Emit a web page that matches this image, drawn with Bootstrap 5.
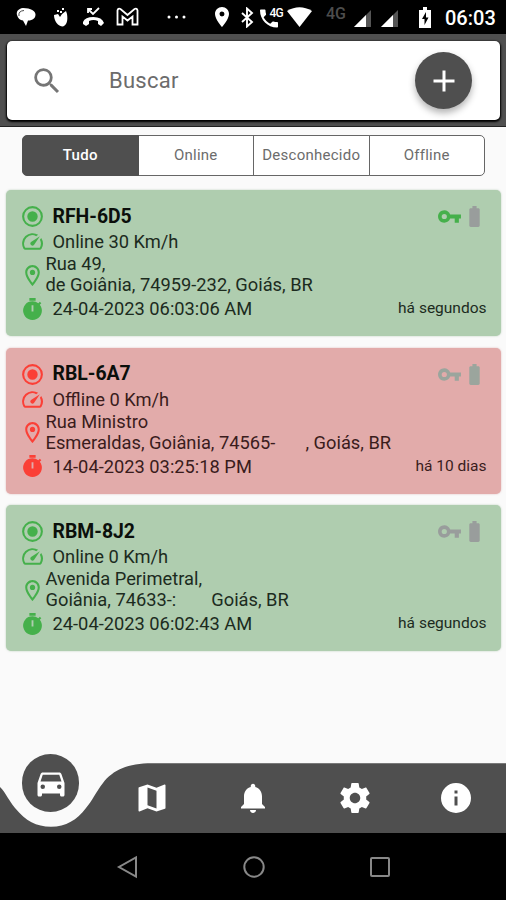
<!DOCTYPE html>
<html lang="pt-BR">
<head>
<meta charset="utf-8">
<meta name="viewport" content="width=device-width, initial-scale=1">
<title>Rastreamento</title>
<link href="https://cdn.jsdelivr.net/npm/bootstrap@5.3.0/dist/css/bootstrap.min.css" rel="stylesheet">
<style>
:root{--ink:#4f4f4f}
body{font-family:Roboto,"Liberation Sans",sans-serif;background:#fafafa;width:506px;height:900px;overflow:hidden}
svg{display:block;flex:none;fill:currentColor}
.i25{width:25px;height:25px}
.i36{width:36px;height:36px}
/* system status bar */
.sysbar{height:34px;padding-left:16px;background:#000}
.sysbar .s1{margin-left:17px}.sysbar .s2{margin-left:13px}.sysbar .s3{margin-left:11px}
.sysbar .s4{margin-left:28px}.sysbar .s5{margin-left:29px}.sysbar .s6{margin-left:12px}
.sysbar .s7{margin-left:4px}.sysbar .s8{margin:3px 0 0 8px}.sysbar .s9{margin:3px 0 0 10px}
.sysbar .s10{margin-left:21px}
.net{font-size:16px;line-height:1;color:#4d4d4d;font-weight:500;margin:-7px 0 0 14px}
.clock{font-size:20px;font-weight:500;line-height:1;margin:2px 0 0 14px}
.call{width:23px;height:24px;margin-left:6px}
.call span{position:absolute;right:0;top:2px;font-size:12px;line-height:1;font-weight:500;letter-spacing:-.8px}
/* search header */
.top-area{height:93px;padding:7px 6px 6px 7px;background:var(--ink);border-bottom:1px solid #222}
.search-box{height:79px;border-radius:5px;padding:0 28px 0 22.5px;background:#fff;box-shadow:0 1px 2px 1px #000}
.search-box svg.mag{width:34px;height:34px;color:#757575}
.search-box .form-control{font-size:22px;letter-spacing:.25px;color:#666;padding:0;margin-left:45.5px}
.search-box .form-control::placeholder{color:#6c6c6c;opacity:1}
.fab{width:57px;height:57px;background:var(--ink);box-shadow:0 4px 7px rgba(0,0,0,.3)}
/* filter */
.seg{margin:8px 21px 0 22px;height:41px}
.seg .btn{flex:1 1 0;width:0;padding:0;font-size:15px;border:1px solid #666;color:#6c6c6c;background:#fff;border-radius:5px;letter-spacing:.25px}
.seg .btn.active{background:var(--ink);color:#fff;border-color:var(--ink);font-weight:500}
/* vehicles */
.fleet{margin:14px 5px 0 6px;gap:11.5px}
.unit{height:146px;border-radius:5px;border:0;padding:13.5px 14.5px 13px;background:#afcdaf;box-shadow:0 0 2px rgba(120,160,120,.5);color:#1c2b1e;font-size:18.3px;--st:#45b04b}
.unit.off{background:#e2abaa;color:#3a1c1c;--st:#fb3f36;box-shadow:0 0 2px rgba(200,120,120,.5)}
.unit .st{color:var(--st)}
.unit .txt{margin-left:7px}
.unit svg:first-child{margin-left:-.5px;margin-right:.5px}
.plate{font-weight:700;color:#0b0f0b;font-size:19.4px}
.r26{height:26px}.r25{height:24.5px}
.addr{height:42px;line-height:20.8px}
.addr .gap-a{margin-left:30px}
.addr .gap-b{margin-left:35px}
.ago{font-size:15.5px}
.dim{color:#9ba59d}
.dim-b{color:#999d9c}
/* bottom navigation */
.dock{margin-top:auto;height:70px;color:#fff}
.dock .shape{position:absolute;left:0;top:0;color:var(--ink)}
.dock .slot{position:relative;width:101.2px}
.dock .slot>svg{margin-left:.8px}
.dock .disc{width:57.5px;height:57.5px;background:var(--ink);margin-top:-30px}
.keys{height:67px;background:#000;padding:0 112px}
.keys svg{fill:none;stroke:#888;stroke-width:2}
</style>
</head>
<body class="d-flex flex-column">
<div class="sysbar d-flex align-items-center text-white">
  <svg width="20" height="20" viewBox="0 0 20 20"><path d="M7 1C2 1.500 0 5 1 8c1 3.500 3 5 6 5.500l3 5.500 2-5.500c5 0 7.500-2.500 7.500-6S15 1 7 1z"/><path d="M3 9Q2 4 8 3.500" fill="none" stroke="#000" stroke-width=".7"/></svg>
  <svg class="s1" width="16" height="20" viewBox="0 0 16 20"><path d="M1 8l4-1 2 3 2-3 4-3 1 3c1 6 0 11-4 12.500C5 19.500 1 14 1 8z"/><path d="M4 3h2v2H4zM9 1h2v2H9zM7 4h2v2H7z"/></svg>
  <svg class="s2" width="23" height="20" viewBox="0 0 23 20"><path d="M1 17l3 2 3-2v-3q4.500-2 9 0v3l3 2 3-3q-2-6-10.500-6T1 15z"/><path d="M6 2l5 5 6-6M6 6V2h4" fill="none" stroke="#fff" stroke-width="1.800"/></svg>
  <svg class="s3" width="23" height="20" viewBox="0 0 23 20"><path d="M1.500 17.500V3.500Q2 1 4.500 2L11.500 8 18.500 2Q21 1 21.500 3.500v14h-5V9.500l-5 4-5-4v8z" fill="none" stroke="#fff" stroke-width="1.800"/></svg>
  <svg class="s4" width="19" height="4" viewBox="0 0 19 4"><circle cx="2" cy="2" r="1.500"/><circle cx="9.500" cy="2" r="1.500"/><circle cx="17" cy="2" r="1.500"/></svg>
  <svg class="s5" width="14" height="20" viewBox="5 2 14 20"><path d="M12 2C8.130 2 5 5.130 5 9c0 5.250 7 13 7 13s7-7.750 7-13c0-3.870-3.130-7-7-7zm0 9.500a2.500 2.500 0 010-5 2.500 2.500 0 010 5z"/></svg>
  <svg class="s6" width="13" height="21" viewBox="0 0 13 21"><path d="M1 6l10 9-5 4.500v-18L11 6 1 15" fill="none" stroke="#fff" stroke-width="1.900"/></svg>
  <div class="call position-relative">
    <svg class="mt-1" width="18" height="19" viewBox="3 3 18 18"><path d="M20 15.500c-1.250 0-2.450-.2-3.570-.57-.35-.11-.74-.03-1.020.24l-2.200 2.200c-2.830-1.440-5.150-3.750-6.590-6.590l2.200-2.210c.28-.26.36-.65.25-1C8.700 6.450 8.500 5.250 8.500 4c0-.55-.45-1-1-1H4c-.55 0-1 .45-1 1 0 9.390 7.610 17 17 17 .55 0 1-.45 1-1v-3.500c0-.55-.45-1-1-1z"/></svg>
    <span>4G</span>
  </div>
  <svg class="s7" width="25" height="20" viewBox="0 0 25 20"><path d="M0 4Q12.500-3.500 25 4L12.500 20z"/></svg>
  <span class="net">4G</span>
  <svg class="s8" width="17" height="17" viewBox="0 0 17 17"><path d="M0 17L17 0v17z" fill="#555"/><path d="M0 17L12 5v12z"/></svg>
  <svg class="s9" width="17" height="17" viewBox="0 0 17 17"><path d="M0 17L17 0v17z" fill="#555"/><path d="M0 17L12 5v12z"/></svg>
  <svg class="s10" width="12" height="21" viewBox="0 0 12 21"><path d="M0 3h4V0h4v3h4v18H0z"/><path d="M7 5l-4 7h2.500v6l4-7.500H7z" fill="#000"/></svg>
  <span class="clock">06:03</span>
</div>

<header class="top-area">
  <div class="search-box d-flex align-items-center">
    <svg class="mag" viewBox="0 0 24 24"><path d="M15.500 14h-.79l-.28-.27A6.471 6.471 0 0016 9.500 6.500 6.500 0 109.500 16c1.610 0 3.090-.59 4.230-1.570l.27.28v.79l5 4.990L20.490 19l-4.990-5zm-6 0C7.010 14 5 11.990 5 9.500S7.010 5 9.500 5 14 7.010 14 9.500 11.990 14 9.500 14z"/></svg>
    <input class="form-control border-0 shadow-none bg-transparent" type="text" placeholder="Buscar" aria-label="Buscar">
    <button class="fab btn border-0 rounded-circle p-0 d-flex align-items-center justify-content-center text-white flex-shrink-0" aria-label="Adicionar">
      <svg class="i36" viewBox="0 0 24 24"><path d="M19 13h-6v6h-2v-6H5v-2h6V5h2v6h6v2z"/></svg>
    </button>
  </div>
</header>

<div class="seg btn-group">
  <button class="btn active">Tudo</button>
  <button class="btn">Online</button>
  <button class="btn">Desconhecido</button>
  <button class="btn">Offline</button>
</div>

<svg class="d-none">
  <symbol id="radio" viewBox="0 0 24 24"><path d="M12 7a5 5 0 100 10 5 5 0 000-10zm0-5a10 10 0 100 20 10 10 0 000-20zm0 18a8 8 0 110-16 8 8 0 010 16z"/></symbol>
  <symbol id="speed" viewBox="0 0 24 24"><path d="M20.380 8.570l-1.230 1.850a8 8 0 01-.22 7.580H5.070A8 8 0 0115.580 6.850l1.850-1.230A10 10 0 003.350 19a2 2 0 001.720 1h13.850a2 2 0 001.740-1 10 10 0 00-.27-10.440zm-9.790 6.840a2 2 0 002.830 0l5.660-8.490-8.490 5.660a2 2 0 000 2.830z"/></symbol>
  <symbol id="pin" viewBox="0 0 24 24"><path d="M12 2C8.130 2 5 5.130 5 9c0 5.250 7 13 7 13s7-7.750 7-13c0-3.870-3.130-7-7-7zM7 9c0-2.760 2.240-5 5-5s5 2.240 5 5c0 2.880-2.880 7.190-5 9.880C9.920 16.210 7 11.850 7 9z"/><circle cx="12" cy="9" r="2.500"/></symbol>
  <symbol id="timer" viewBox="0 0 24 24"><path fill-rule="evenodd" d="M15 1H9v2.500h6V1zm4.030 6.390l1.420-1.420c-.43-.51-.9-.99-1.410-1.410l-1.420 1.420A8.962 8.962 0 0012 4a9 9 0 107.030 3.390zM12.900 14h-1.800V8h1.800v6z"/></symbol>
  <symbol id="key" viewBox="0 0 24 24"><path d="M12.650 10C11.830 7.670 9.610 6 7 6c-3.310 0-6 2.690-6 6s2.690 6 6 6c2.610 0 4.830-1.670 5.650-4H17v4h4v-4h2v-4H12.650zM7 14.500a2.500 2.500 0 110-5 2.500 2.500 0 010 5z"/></symbol>
  <symbol id="batt" viewBox="0 0 24 24"><path d="M15.670 4H14V2h-4v2H8.330C7.600 4 7 4.600 7 5.330v15.330C7 21.400 7.600 22 8.330 22h7.330c.74 0 1.340-.6 1.340-1.330V5.330C17 4.600 16.400 4 15.670 4z"/></symbol>
</svg>

<main class="fleet d-flex flex-column">
  <article class="unit card">
    <div class="r26 d-flex align-items-center"><svg class="i25 st"><use href="#radio"/></svg><span class="txt plate">RFH-6D5</span><svg class="i25 st ms-auto"><use href="#key"/></svg><svg class="i25 dim-b"><use href="#batt"/></svg></div>
    <div class="r25 d-flex align-items-center"><svg class="i25 st"><use href="#speed"/></svg><span class="txt">Online 30 Km/h</span></div>
    <div class="addr d-flex align-items-center"><svg class="i25 st"><use href="#pin"/></svg><div>Rua 49,<br>de Goiânia, 74959-232, Goiás, BR</div></div>
    <div class="r26 d-flex align-items-center"><svg class="i25 st"><use href="#timer"/></svg><span class="txt">24-04-2023 06:03:06 AM</span><span class="ago ms-auto">há segundos</span></div>
  </article>
  <article class="unit off card">
    <div class="r26 d-flex align-items-center"><svg class="i25 st"><use href="#radio"/></svg><span class="txt plate">RBL-6A7</span><svg class="i25 dim ms-auto"><use href="#key"/></svg><svg class="i25 dim"><use href="#batt"/></svg></div>
    <div class="r25 d-flex align-items-center"><svg class="i25 st"><use href="#speed"/></svg><span class="txt">Offline 0 Km/h</span></div>
    <div class="addr d-flex align-items-center"><svg class="i25 st"><use href="#pin"/></svg><div>Rua Ministro<br>Esmeraldas, Goiânia, 74565-<span class="gap-a">, Goiás, BR</span></div></div>
    <div class="r26 d-flex align-items-center"><svg class="i25 st"><use href="#timer"/></svg><span class="txt">14-04-2023 03:25:18 PM</span><span class="ago ms-auto">há 10 dias</span></div>
  </article>
  <article class="unit card">
    <div class="r26 d-flex align-items-center"><svg class="i25 st"><use href="#radio"/></svg><span class="txt plate">RBM-8J2</span><svg class="i25 dim-b ms-auto"><use href="#key"/></svg><svg class="i25 dim-b"><use href="#batt"/></svg></div>
    <div class="r25 d-flex align-items-center"><svg class="i25 st"><use href="#speed"/></svg><span class="txt">Online 0 Km/h</span></div>
    <div class="addr d-flex align-items-center"><svg class="i25 st"><use href="#pin"/></svg><div>Avenida Perimetral,<br>Goiânia, 74633-:<span class="gap-b">Goiás, BR</span></div></div>
    <div class="r26 d-flex align-items-center"><svg class="i25 st"><use href="#timer"/></svg><span class="txt">24-04-2023 06:02:43 AM</span><span class="ago ms-auto">há segundos</span></div>
  </article>
</main>

<nav class="dock position-relative d-flex align-items-center">
  <svg class="shape" width="506" height="70" viewBox="0 763 506 70"><path d="M152 763.300C128 763.300 113 770 103 783C96 792 92 801 86 808C77 820 66 826.700 51 826.700C36 826.700 26 821 15 808C9 801 6 793 0 787V833H506V763.300Z"/></svg>
  <div class="slot d-flex justify-content-center"><div class="disc rounded-circle d-flex align-items-center justify-content-center"><svg class="i36" viewBox="0 0 24 24"><path d="M18.920 6.010C18.720 5.420 18.160 5 17.500 5h-11c-.66 0-1.210.42-1.420 1.010L3 12v8c0 .55.45 1 1 1h1c.55 0 1-.45 1-1v-1h12v1c0 .55.45 1 1 1h1c.55 0 1-.45 1-1v-8l-2.080-5.990zM6.500 16a1.500 1.500 0 110-3 1.500 1.500 0 010 3zm11 0a1.500 1.500 0 110-3 1.500 1.500 0 010 3zM5 11l1.500-4.500h11L19 11H5z"/></svg></div></div>
  <div class="slot d-flex justify-content-center"><svg class="i36" viewBox="0 0 24 24"><path d="M20.500 3l-.16.030L15 5.100 9 3 3.360 4.900c-.21.070-.36.250-.36.480V20.500c0 .28.22.5.5.5l.16-.030L9 18.900l6 2.100 5.640-1.900c.21-.070.36-.250.36-.480V3.500c0-.28-.22-.5-.5-.5zM15 19l-6-2.110V5l6 2.110V19z"/></svg></div>
  <div class="slot d-flex justify-content-center"><svg class="i36" viewBox="0 0 24 24"><path d="M12 22c1.100 0 2-.9 2-2h-4c0 1.100.89 2 2 2zm6-6v-5c0-3.070-1.640-5.640-4.500-6.320V4c0-.83-.67-1.500-1.500-1.500s-1.500.67-1.500 1.500v.68C7.630 5.360 6 7.920 6 11v5l-2 2v1h16v-1l-2-2z"/></svg></div>
  <div class="slot d-flex justify-content-center"><svg class="i36" viewBox="0 0 24 24"><path d="M19.430 12.980c.04-.32.07-.64.07-.98s-.03-.66-.07-.98l2.110-1.650c.19-.15.24-.42.12-.64l-2-3.460c-.12-.22-.39-.3-.61-.22l-2.490 1c-.52-.4-1.080-.73-1.690-.98l-.38-2.650A.488.488 0 0014 2h-4c-.25 0-.46.18-.49.42l-.38 2.650c-.61.25-1.170.59-1.690.98l-2.490-1c-.23-.09-.49 0-.61.22l-2 3.460c-.13.22-.07.49.12.64l2.110 1.650c-.04.32-.07.65-.07.98s.03.66.07.98l-2.110 1.650c-.19.15-.24.42-.12.64l2 3.460c.12.22.39.3.61.22l2.490-1c.52.4 1.080.73 1.690.98l.38 2.650c.03.24.24.42.49.42h4c.25 0 .46-.18.49-.42l.38-2.650c.61-.25 1.170-.59 1.690-.98l2.490 1c.23.09.49 0 .61-.22l2-3.460c.12-.22.07-.49-.12-.64l-2.110-1.650zM12 15.500c-1.930 0-3.500-1.570-3.500-3.500s1.570-3.500 3.500-3.500 3.500 1.570 3.500 3.500-1.570 3.500-3.500 3.500z"/></svg></div>
  <div class="slot d-flex justify-content-center"><svg class="i36" viewBox="0 0 24 24"><path d="M12 2a10 10 0 100 20 10 10 0 000-20zm1 15h-2v-6h2v6zm0-8h-2V7h2v2z"/></svg></div>
</nav>
<div class="keys d-flex align-items-center justify-content-between">
  <svg width="30" height="24" viewBox="0 0 30 24"><path d="M24 2.500v19L7 12z"/></svg>
  <svg width="24" height="24" viewBox="0 0 24 24"><circle cx="12" cy="12" r="9.700"/></svg>
  <svg width="29" height="24" viewBox="0 0 29 24"><rect x="6" y="3" width="18" height="18" rx="1"/></svg>
</div>
<script src="https://cdn.jsdelivr.net/npm/bootstrap@5.3.0/dist/js/bootstrap.bundle.min.js"></script>
</body>
</html>
